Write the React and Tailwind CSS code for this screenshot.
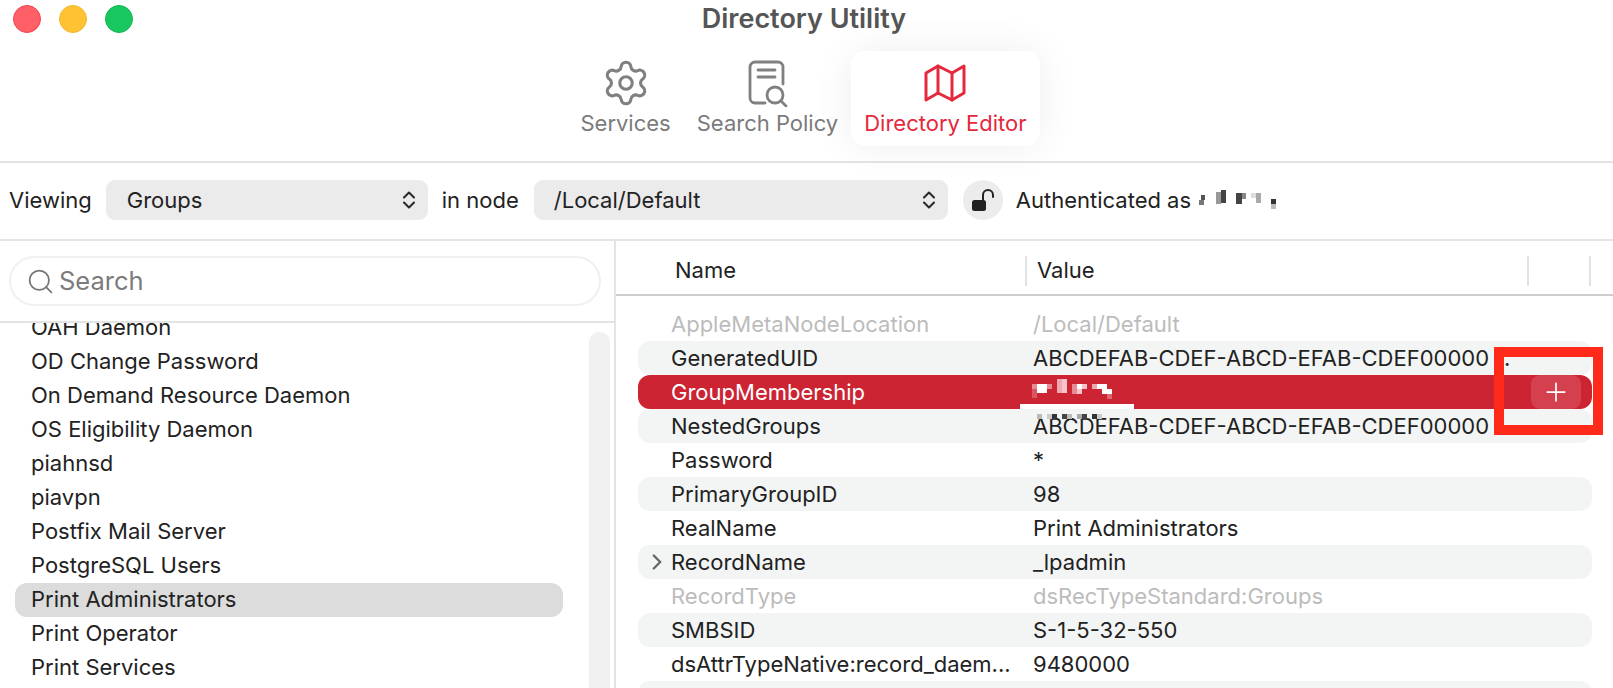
import { Settings, Search, ChevronRight, Plus } from 'lucide-react';

const font = 'font-["Inter","Liberation_Sans",sans-serif]';

const groups = [
  { name: 'OAH Daemon' },
  { name: 'OD Change Password' },
  { name: 'On Demand Resource Daemon' },
  { name: 'OS Eligibility Daemon' },
  { name: 'piahnsd' },
  { name: 'piavpn' },
  { name: 'Postfix Mail Server' },
  { name: 'PostgreSQL Users' },
  { name: 'Print Administrators', selected: true },
  { name: 'Print Operator' },
  { name: 'Print Services' },
];

const attrs = [
  { name: 'AppleMetaNodeLocation', value: '/Local/Default', dim: true },
  { name: 'GeneratedUID', value: 'ABCDEFAB-CDEF-ABCD-EFAB-CDEF00000', stripe: true, dot: true },
  { name: 'GroupMembership', value: '', selected: true },
  { name: 'NestedGroups', value: 'ABCDEFAB-CDEF-ABCD-EFAB-CDEF00000', stripe: true },
  { name: 'Password', value: '*' },
  { name: 'PrimaryGroupID', value: '98', stripe: true },
  { name: 'RealName', value: 'Print Administrators' },
  { name: 'RecordName', value: '_lpadmin', stripe: true, arrow: true },
  { name: 'RecordType', value: 'dsRecTypeStandard:Groups', dim: true },
  { name: 'SMBSID', value: 'S-1-5-32-550', stripe: true },
  { name: 'dsAttrTypeNative:record_daem...', value: '9480000' },
  { name: '', value: '', stripe: true },
];

const Updown = () => (
  <svg width="14" height="22" viewBox="0 0 14 22" fill="none" stroke="#2a2a2a" strokeWidth="2.1" strokeLinecap="round" strokeLinejoin="round">
    <path d="M2 8.5 7 3.5 12 8.5" />
    <path d="M2 13.5 7 18.5 12 13.5" />
  </svg>
);

const DocSearch = () => (
  <svg width="42" height="48" viewBox="0 0 42 48" fill="none" stroke="#808080" strokeWidth="2.8" strokeLinecap="round">
    <path d="M19 44H9a5 5 0 0 1-5-5V8a5 5 0 0 1 5-5h23a5 5 0 0 1 5 5v17" />
    <path d="M12 11h17M12 18h17" />
    <circle cx="29" cy="36" r="8" fill="#fff" />
    <path d="m35 42 5 5" />
  </svg>
);

const FoldedMap = () => (
  <svg width="42" height="40" viewBox="0 0 42 40" fill="none" stroke="#e5283c" strokeWidth="3" strokeLinejoin="round" strokeLinecap="round">
    <path d="M2 10 14 3 28 10 40 3V30L28 37 14 30 2 37Z" />
    <path d="M14 3V30M28 10V37" />
  </svg>
);

const OpenLock = () => (
  <svg width="24" height="26" viewBox="0 0 24 26" fill="none">
    <rect x="1" y="13" width="14" height="11" rx="2.5" fill="#222" />
    <path d="M12 13V8a5 5 0 0 1 10 0v2" stroke="#222" strokeWidth="2" strokeLinecap="round" />
  </svg>
);

const Pixels = ({ blocks, width, height }) => (
  <svg width={width} height={height} viewBox={`0 0 ${width} ${height}`}>
    {blocks.map(([x, y, w, h, fill], i) => (
      <rect key={i} x={x} y={y} width={w} height={h} fill={fill} />
    ))}
  </svg>
);

const authBlocks = [
  [2, 5, 4, 5, '#555'], [0, 10, 5, 5, '#777'],
  [17, 2, 5, 12, '#999'], [22, 0, 5, 13, '#444'],
  [37, 3, 6, 11, '#444'], [43, 3, 4, 6, '#888'],
  [52, 3, 5, 5, '#ddd'], [57, 3, 5, 10, '#aaa'],
  [72, 9, 5, 5, '#333'], [72, 14, 5, 5, '#bbb'],
];

const memberBlocks = [
  [0, 6, 5, 5, '#e78a94'], [5, 6, 10, 9, '#fff'], [15, 6, 5, 5, '#e78a94'], [0, 11, 5, 9, '#d85562'],
  [25, 1, 5, 14, '#eea9b0'], [30, 1, 5, 14, '#f5c3c8'],
  [40, 6, 5, 10, '#e78a94'], [45, 6, 5, 5, '#fff'], [45, 11, 5, 5, '#f5c3c8'], [50, 6, 5, 5, '#f5c3c8'],
  [60, 6, 5, 5, '#f0a8b0'], [65, 6, 10, 5, '#fff'], [70, 11, 5, 5, '#fff'], [75, 11, 5, 5, '#fff'], [75, 16, 5, 5, '#dc6672'],
];

const belowBlocks = [
  [0, 0, 5, 5, '#bbb'], [10, 0, 5, 5, '#ccc'], [15, 0, 5, 5, '#333'],
  [25, 0, 5, 5, '#444'], [30, 0, 5, 5, '#bbb'], [40, 0, 5, 5, '#aaa'],
  [45, 0, 5, 5, '#444'], [55, 0, 5, 5, '#333'], [60, 0, 5, 5, '#ccc'],
];

function Tab({ icon, label, active }) {
  return (
    <div className={`flex h-[95px] flex-col items-center justify-start rounded-[14px] px-[13px] pt-[6px] ${active ? 'bg-white text-[#e5283c] shadow-[0_0_40px_rgba(0,0,0,0.07)]' : 'text-[#7b7b7b]'}`}>
      <div className="flex h-[51px] items-center justify-center">{icon}</div>
      <span className="text-[22px] leading-[30px]">{label}</span>
    </div>
  );
}

function Select({ label, className }) {
  return (
    <div className={`flex h-[40px] items-center justify-between rounded-[9px] bg-[#ebebeb] pr-[12px] ${className}`}>
      <span className="text-[22px] text-[#222]">{label}</span>
      <Updown />
    </div>
  );
}

function AttrRow({ row }) {
  const rowBg = row.selected ? 'bg-[#cc2433] text-white' : row.stripe ? 'bg-[#f3f5f5]' : '';
  const textCol = row.dim ? 'text-[#bcbcbc]' : row.selected ? 'text-white' : 'text-[#222]';
  return (
    <div className={`flex h-[34px] items-center rounded-[12px] text-[22px] ${rowBg} ${textCol}`}>
      <div className="flex w-[33px] shrink-0 items-center justify-end">
        {row.arrow && <ChevronRight size={26} strokeWidth={2.2} className="mr-[1px] text-[#666]" />}
      </div>
      <div className="w-[362px] shrink-0 truncate">{row.name}</div>
      <div className="relative min-w-0 flex-1 whitespace-nowrap">
        {row.value}
        {row.dot && <span className="ml-[15px]">.</span>}
      </div>
      {row.selected && (
        <div className="mr-[11px] flex h-[34px] w-[50px] shrink-0 items-center justify-center rounded-[9px] bg-[#d5404f]">
          <Plus size={30} strokeWidth={1.4} className="text-white" />
        </div>
      )}
    </div>
  );
}

export default function App() {
  return (
    <div className={`relative flex h-[688px] w-[1613px] flex-col overflow-hidden bg-white ${font}`}>
      {/* title bar + tabs */}
      <div className="h-[163px] shrink-0 border-b-2 border-[#e4e4e4]">
        <div className="grid h-[51px] grid-cols-[1fr_auto_1fr] items-start">
          <div className="flex gap-[18px] pl-[13px] pt-[5px]">
            <div className="h-[28px] w-[28px] rounded-full border border-[#f2434f] bg-[#ff5f67]" />
            <div className="h-[28px] w-[28px] rounded-full border border-[#f5b62e] bg-[#ffc233]" />
            <div className="h-[28px] w-[28px] rounded-full border border-[#12b955] bg-[#18c75e]" />
          </div>
          <div className="pr-[5px] pt-[3px] text-[27px] font-semibold leading-[32px] text-[#555]">Directory Utility</div>
          <div />
        </div>
        <div className="flex items-start justify-center pr-[6px]">
          <Tab label="Services" icon={<Settings size={50} strokeWidth={1.5} className="text-[#808080]" />} />
          <Tab label="Search Policy" icon={<DocSearch />} />
          <Tab active label="Directory Editor" icon={<FoldedMap />} />
        </div>
      </div>

      {/* viewing row */}
      <div className="flex h-[78px] shrink-0 items-center border-b-2 border-[#e4e4e4] pb-[2px] pl-[9px] text-[22px] text-[#222]">
        <span>Viewing</span>
        <Select label="Groups" className="ml-[14px] w-[322px] pl-[21px]" />
        <span className="ml-[14px]">in node</span>
        <Select label="/Local/Default" className="ml-[15px] w-[414px] pl-[20px]" />
        <div className="ml-[15px] flex h-[40px] w-[40px] items-center justify-center rounded-full bg-[#ececec]">
          <OpenLock />
        </div>
        <span className="ml-[13px]">Authenticated as</span>
        <div className="ml-[8px]">
          <Pixels width={78} height={20} blocks={authBlocks} />
        </div>
      </div>

      <div className="flex min-h-0 flex-1">
        {/* group list */}
        <div className="flex w-[616px] shrink-0 flex-col border-r-2 border-[#e4e4e4]">
          <div className="flex h-[82px] shrink-0 items-center border-b-2 border-[#e4e4e4] pl-[9px] pr-[13px]">
            <div className="flex h-[50px] w-full items-center rounded-full border-2 border-[#f0f0f0] pl-[15px] text-[#7c7c7c]">
              <Search size={29} strokeWidth={1.5} className="text-[#777]" />
              <span className="ml-[4px] text-[25.5px]">Search</span>
            </div>
          </div>
          <div className="flex min-h-0 flex-1 overflow-hidden pl-[15px]">
            <div className="-mt-[12px] w-[548px] shrink-0">
              {groups.map((g) => (
                <div key={g.name} className={`flex h-[34px] items-center rounded-[12px] pb-[2px] pl-[16px] text-[22px] text-[#222] ${g.selected ? 'bg-[#dcdcdc]' : ''}`}>
                  {g.name}
                </div>
              ))}
            </div>
            <div className="ml-[26px] mt-[9px] w-[21px] rounded-t-[10px] bg-[#f1f1f1]" />
          </div>
        </div>

        {/* attribute table */}
        <div className="flex min-w-0 flex-1 flex-col">
          <div className="flex h-[55px] shrink-0 items-center border-b-2 border-[#cdcdcd] pt-[6px] text-[22px] text-[#222]">
            <span className="ml-[59px] w-[350px]">Name</span>
            <div className="h-[30px] w-[2px] bg-[#e2e2e2]" />
            <span className="ml-[10px] w-[490px]">Value</span>
            <div className="h-[30px] w-[2px] bg-[#e2e2e2]" />
            <div className="ml-[60px] h-[30px] w-[2px] bg-[#e2e2e2]" />
          </div>
          <div className="overflow-hidden pl-[22px] pr-[21px] pt-[11px]">
            {attrs.map((r, i) => (
              <AttrRow key={i} row={r} />
            ))}
          </div>
        </div>
      </div>

      {/* pixelated redaction over the selected row and the row under it */}
      <div className="absolute left-[1032px] top-[378px] flex">
        <Pixels width={80} height={21} blocks={memberBlocks} />
      </div>
      <div className="absolute left-[1020px] top-[404px] h-[5px] w-[114px] bg-white" />
      <div className="absolute left-[1037px] top-[414px] flex">
        <Pixels width={65} height={5} blocks={belowBlocks} />
      </div>

      {/* red annotation box */}
      <div className="absolute left-[1494px] top-[347px] h-[88px] w-[109px] border-[10px] border-[#ff2a1a]" />
    </div>
  );
}
